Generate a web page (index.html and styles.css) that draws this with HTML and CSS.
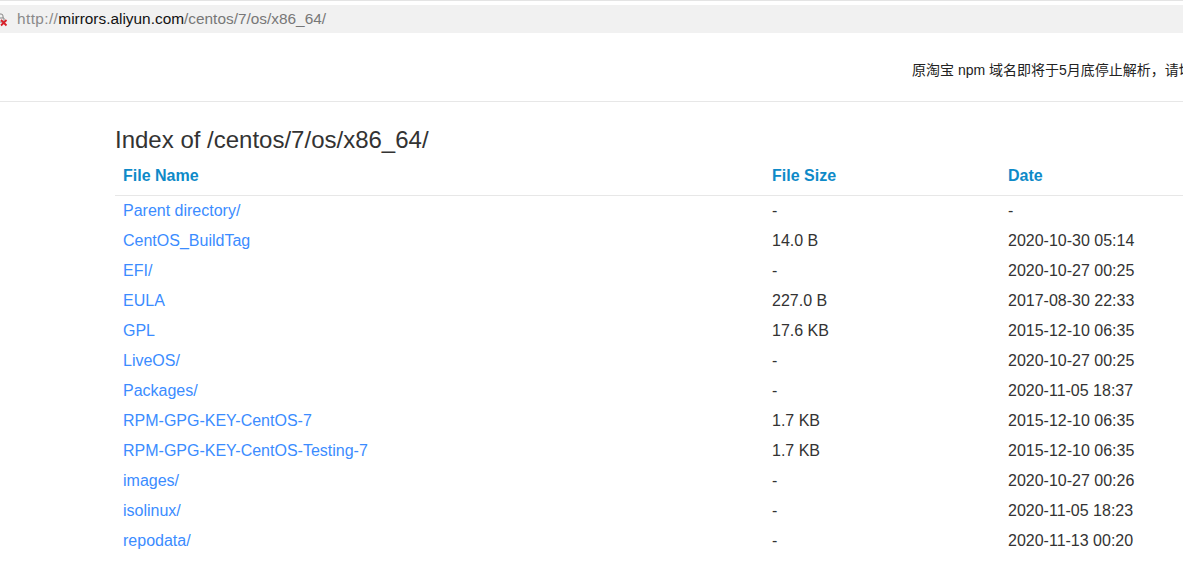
FILE: index.html
```html
<!DOCTYPE html>
<html lang="zh">
<head>
<meta charset="utf-8">
<title>Index of /centos/7/os/x86_64/</title>
<link rel="stylesheet" href="styles.css">
</head>
<body>
<div class="address-bar">
  <svg class="lock" width="10" height="16" viewBox="0 0 10 16"><path d="M-1 3h2a2 2 0 0 1 2 2v2M-1 7h5v4h-5z" fill="none" stroke="#888" stroke-width="1"/><path d="M1 9l5.500 5.500M6.500 9l-5.500 5.500" stroke="#d8212a" stroke-width="1.8"/></svg>
  <span class="url"><span class="scheme">http://</span><span class="host">mirrors.aliyun.com</span>/centos/7/os/x86_64/</span>
</div>
<div class="notice"><span class="notice-text">原淘宝 npm 域名即将于5月底停止解析，请切换至新域名</span></div>
<main class="content">
  <h1 class="title">Index of /centos/7/os/x86_64/</h1>
  <div class="table">
    <div class="row head"><span>File Name</span><span>File Size</span><span>Date</span></div>
    <div class="row"><a href="#">Parent directory/</a><span>-</span><span>-</span></div>
    <div class="row"><a href="#">CentOS_BuildTag</a><span>14.0 B</span><span>2020-10-30 05:14</span></div>
    <div class="row"><a href="#">EFI/</a><span>-</span><span>2020-10-27 00:25</span></div>
    <div class="row"><a href="#">EULA</a><span>227.0 B</span><span>2017-08-30 22:33</span></div>
    <div class="row"><a href="#">GPL</a><span>17.6 KB</span><span>2015-12-10 06:35</span></div>
    <div class="row"><a href="#">LiveOS/</a><span>-</span><span>2020-10-27 00:25</span></div>
    <div class="row"><a href="#">Packages/</a><span>-</span><span>2020-11-05 18:37</span></div>
    <div class="row"><a href="#">RPM-GPG-KEY-CentOS-7</a><span>1.7 KB</span><span>2015-12-10 06:35</span></div>
    <div class="row"><a href="#">RPM-GPG-KEY-CentOS-Testing-7</a><span>1.7 KB</span><span>2015-12-10 06:35</span></div>
    <div class="row"><a href="#">images/</a><span>-</span><span>2020-10-27 00:26</span></div>
    <div class="row"><a href="#">isolinux/</a><span>-</span><span>2020-11-05 18:23</span></div>
    <div class="row"><a href="#">repodata/</a><span>-</span><span>2020-11-13 00:20</span></div>
  </div>
</main>
</body>
</html>
```

FILE: styles.css
```css
html, body {
  margin: 0;
  height: 586px;
  overflow: hidden;
  background: #fff;
}
body {
  font-family: "Liberation Sans", "Noto Sans CJK SC", sans-serif;
  font-size: 16px;
  color: #333;
  border-top: 1px solid #e4e4e4;
  box-sizing: border-box;
}
.address-bar {
  display: flex;
  align-items: center;
  gap: 10px;
  height: 28px;
  margin-top: 4px;
  background: #f1f1f1;
  overflow: hidden;
}
.lock { flex: none; }
.url {
  font-size: 15.4px;
  color: #777;
  margin-left: -3px;
}
.scheme {
  color: #8a8a8a;
  letter-spacing: 0.4px;
}
.host { color: #111; }
.notice {
  height: 68px;
  border-bottom: 1px solid #e7e7e7;
  display: flex;
  align-items: center;
  padding-left: 912px;
  overflow: hidden;
  white-space: nowrap;
}
.notice-text {
  font-size: 14px;
  color: #222;
  position: relative;
  top: 2px;
}
.content { padding-left: 115px; }
.title {
  margin: 25px 0 0;
  font-size: 24px;
  line-height: 26px;
  font-weight: 400;
  color: #333;
}
.table {
  width: 1200px;
  margin-top: 5px;
}
.row {
  display: grid;
  grid-template-columns: 649px 236px 1fr;
  height: 30px;
  line-height: 30px;
  padding-left: 8px;
  white-space: nowrap;
}
.row a {
  color: #3b8cff;
  text-decoration: none;
}
.head {
  height: 38px;
  line-height: 35px;
  border-bottom: 1px solid #e7e7e7;
  box-sizing: border-box;
  font-weight: 700;
  color: #0e8ac8;
}
```
